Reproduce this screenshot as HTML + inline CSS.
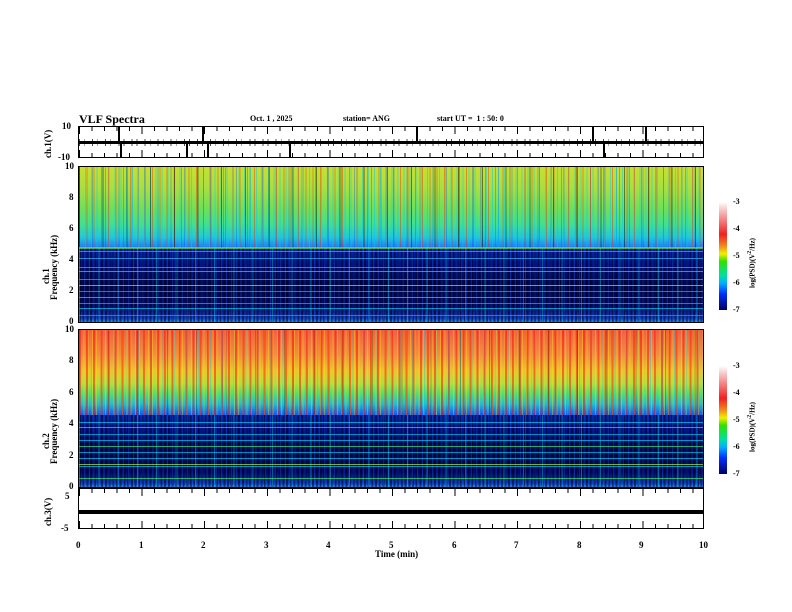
<!DOCTYPE html>
<html><head><meta charset="utf-8"><style>
body{margin:0;width:792px;height:612px;background:#fff;position:relative;overflow:hidden;font-family:"Liberation Serif",serif;font-weight:bold;color:#000}
.a{position:absolute}
.p{position:absolute;left:78px;width:626px;border:1px solid #000;box-sizing:border-box;overflow:hidden}
.tk{position:absolute;left:0;right:0;height:4px;background:repeating-linear-gradient(90deg,#000 0 1px,transparent 1px 12.52px)}
.TK{position:absolute;left:0;right:0;height:7px;background:repeating-linear-gradient(90deg,#000 0 1px,transparent 1px 62.6px)}
.t{position:absolute;font-size:9px;white-space:nowrap}
.rot{position:absolute;transform:rotate(-90deg);transform-origin:0 0;font-size:9px;white-space:nowrap}
.up{position:absolute;left:0;right:0;top:0}
.u1{background:
repeating-linear-gradient(90deg,rgba(0,0,0,.45) 0 1px,transparent 1px 23.7px),
repeating-linear-gradient(90deg,rgba(255,30,0,.4) 0 1px,transparent 1px 7.3px),
repeating-linear-gradient(90deg,rgba(0,200,255,.45) 0 1px,transparent 1px 5.9px),
repeating-linear-gradient(90deg,rgba(0,60,255,.3) 0 1px,transparent 1px 13.1px),
linear-gradient(#c8e030 0%,#a8e040 25%,#70e058 50%,#40e090 70%,#20c8d8 86%,#2070ff 100%)}
.u2{background:
repeating-linear-gradient(90deg,rgba(0,0,0,.25) 0 1px,transparent 1px 29.3px),
repeating-linear-gradient(90deg,rgba(255,0,0,.45) 0 2px,transparent 2px 7.1px),
repeating-linear-gradient(90deg,rgba(255,230,0,.35) 0 1px,transparent 1px 4.3px),
repeating-linear-gradient(90deg,rgba(0,200,255,.35) 0 1px,transparent 1px 11.9px),
linear-gradient(#f06040 0%,#f09040 28%,#e8c830 48%,#b0e040 62%,#50e070 74%,#20c0d0 86%,#1050f0 100%)}
.dark{position:absolute;left:0;right:0;bottom:0;background:
repeating-linear-gradient(90deg,rgba(0,220,255,.4) 0 1px,transparent 1px 19.3px),
repeating-linear-gradient(90deg,rgba(40,100,255,.3) 0 1px,transparent 1px 4.9px),
repeating-linear-gradient(90deg,rgba(0,0,20,.5) 0 2px,transparent 2px 3.7px),
linear-gradient(#0828b0,#001590 20%,#000850 50%,#000c70 80%,#1040c0 95%,#2090f0)}
.hl{position:absolute;left:0;right:0;height:1px;opacity:.65}
.cb{position:absolute;left:719px;width:8px;background:linear-gradient(#fff 0%,#f6c0c0 8%,#f02020 30%,#f08020 40%,#f0f000 48%,#30e000 55%,#00e0a0 68%,#00b0ff 75%,#0030ff 85%,#000060 100%)}
</style></head><body>
<div class="t" style="left:79px;top:112px;font-size:12px">VLF Spectra</div>
<div class="t" style="left:250px;top:114px;font-size:8px">Oct. 1 , 2025</div>
<div class="t" style="left:343px;top:114px;font-size:8px">station= ANG</div>
<div class="t" style="left:437px;top:114px;font-size:8px">start UT = &nbsp;1 : 50: 0</div>

<div class="p" style="top:126px;height:32px">
<div class="tk" style="top:0"></div><div class="TK" style="top:0"></div>
<div class="tk" style="bottom:0"></div><div class="TK" style="bottom:0"></div>
<div class="a" style="left:0;right:0;top:14px;height:3px;background:#000"></div>
<div class="a" style="left:0;right:0;top:12px;height:7px;background:repeating-linear-gradient(90deg,#000 0 1px,transparent 1px 5.3px,#000 5.3px 6px,transparent 6px 13.1px);opacity:.7"></div>
<div class="a" style="left:39px;top:0;width:2px;height:15px;background:#000"></div>
<div class="a" style="left:123px;top:0;width:2px;height:15px;background:#000"></div>
<div class="a" style="left:337px;top:0;width:2px;height:15px;background:#000"></div>
<div class="a" style="left:513px;top:0;width:2px;height:15px;background:#000"></div>
<div class="a" style="left:566px;top:0;width:2px;height:15px;background:#000"></div>
<div class="a" style="left:41px;top:15px;width:2px;height:16px;background:#000"></div>
<div class="a" style="left:107px;top:15px;width:2px;height:16px;background:#000"></div>
<div class="a" style="left:128px;top:15px;width:2px;height:16px;background:#000"></div>
<div class="a" style="left:210px;top:15px;width:2px;height:16px;background:#000"></div>
<div class="a" style="left:524px;top:15px;width:2px;height:16px;background:#000"></div>
</div>
<div class="t" style="left:62px;top:121px">10</div>
<div class="t" style="left:58px;top:152px">-10</div>
<div class="rot" style="left:43px;top:158px">ch.1(V)</div>

<div class="p" style="top:166px;height:157px">
<div class="up u1" style="height:82px"></div>
<div class="dark" style="height:74px"></div>
<div class="hl" style="bottom:73px;background:#60ff40;height:2px"></div>
<div class="hl" style="bottom:70px;background:#00e0ff"></div>
<div class="hl" style="bottom:63px;background:#40c0ff"></div>
<div class="hl" style="bottom:54px;background:#00e0ff"></div>
<div class="hl" style="bottom:50px;background:#30ff80"></div>
<div class="hl" style="bottom:42px;background:#00e0ff"></div>
<div class="hl" style="bottom:36px;background:#c0ff40"></div>
<div class="hl" style="bottom:30px;background:#00d0ff"></div>
<div class="hl" style="bottom:24px;background:#40ff60"></div>
<div class="hl" style="bottom:18px;background:#00d0ff"></div>
<div class="hl" style="bottom:13px;background:#00e0ff"></div>
<div class="hl" style="bottom:6px;background:#00c0ff"></div>
</div>
<div class="t" style="left:65px;top:161px">10</div>
<div class="t" style="left:69px;top:192px">8</div>
<div class="t" style="left:69px;top:223px">6</div>
<div class="t" style="left:69px;top:254px">4</div>
<div class="t" style="left:69px;top:285px">2</div>
<div class="t" style="left:69px;top:316px">0</div>
<div class="rot" style="left:41px;top:284px">ch.1</div>
<div class="rot" style="left:49px;top:300px">Frequency (kHz)</div>
<div class="cb" style="top:202px;height:108px"></div>
<div class="t" style="left:733px;top:197px;font-size:8px">-3</div>
<div class="t" style="left:733px;top:224px;font-size:8px">-4</div>
<div class="t" style="left:733px;top:251px;font-size:8px">-5</div>
<div class="t" style="left:733px;top:278px;font-size:8px">-6</div>
<div class="t" style="left:733px;top:305px;font-size:8px">-7</div>
<div class="rot" style="left:747px;top:288px;font-size:7px">log(PSD)(V<sup>2</sup>/Hz)</div>

<div class="p" style="top:329px;height:159px">
<div class="up u2" style="height:86px"></div>
<div class="dark" style="height:72px"></div>
<div class="hl" style="bottom:64px;background:#00e0ff"></div>
<div class="hl" style="bottom:59px;background:#40ff60"></div>
<div class="hl" style="bottom:52px;background:#00d0ff"></div>
<div class="hl" style="bottom:46px;background:#00e0ff"></div>
<div class="hl" style="bottom:40px;background:#30ff80"></div>
<div class="hl" style="bottom:34px;background:#00d0ff"></div>
<div class="hl" style="bottom:28px;background:#00e0ff"></div>
<div class="hl" style="bottom:22px;background:#c0ff40"></div>
<div class="hl" style="bottom:20px;background:#00e0ff"></div>
<div class="hl" style="bottom:8px;background:#40ff60"></div>
</div>
<div class="t" style="left:65px;top:324px">10</div>
<div class="t" style="left:69px;top:355px">8</div>
<div class="t" style="left:69px;top:387px">6</div>
<div class="t" style="left:69px;top:418px">4</div>
<div class="t" style="left:69px;top:450px">2</div>
<div class="t" style="left:69px;top:481px">0</div>
<div class="rot" style="left:41px;top:449px">ch.2</div>
<div class="rot" style="left:49px;top:464px">Frequency (kHz)</div>
<div class="cb" style="top:366px;height:108px"></div>
<div class="t" style="left:733px;top:361px;font-size:8px">-3</div>
<div class="t" style="left:733px;top:388px;font-size:8px">-4</div>
<div class="t" style="left:733px;top:415px;font-size:8px">-5</div>
<div class="t" style="left:733px;top:442px;font-size:8px">-6</div>
<div class="t" style="left:733px;top:469px;font-size:8px">-7</div>
<div class="rot" style="left:747px;top:452px;font-size:7px">log(PSD)(V<sup>2</sup>/Hz)</div>

<div class="p" style="top:488px;height:41px">
<div class="tk" style="top:0"></div><div class="TK" style="top:0"></div>
<div class="tk" style="bottom:0"></div><div class="TK" style="bottom:0"></div>
<div class="a" style="left:0;right:0;top:21px;height:4px;background:#000"></div>
</div>
<div class="t" style="left:65px;top:491px">5</div>
<div class="t" style="left:61px;top:523px">-5</div>
<div class="rot" style="left:43px;top:526px">ch.3(V)</div>

<div class="t" style="left:76px;top:540px">0</div>
<div class="t" style="left:139px;top:540px">1</div>
<div class="t" style="left:201px;top:540px">2</div>
<div class="t" style="left:264px;top:540px">3</div>
<div class="t" style="left:326px;top:540px">4</div>
<div class="t" style="left:389px;top:540px">5</div>
<div class="t" style="left:452px;top:540px">6</div>
<div class="t" style="left:514px;top:540px">7</div>
<div class="t" style="left:577px;top:540px">8</div>
<div class="t" style="left:639px;top:540px">9</div>
<div class="t" style="left:699px;top:540px">10</div>
<div class="t" style="left:375px;top:549px">Time (min)</div>
</body></html>
